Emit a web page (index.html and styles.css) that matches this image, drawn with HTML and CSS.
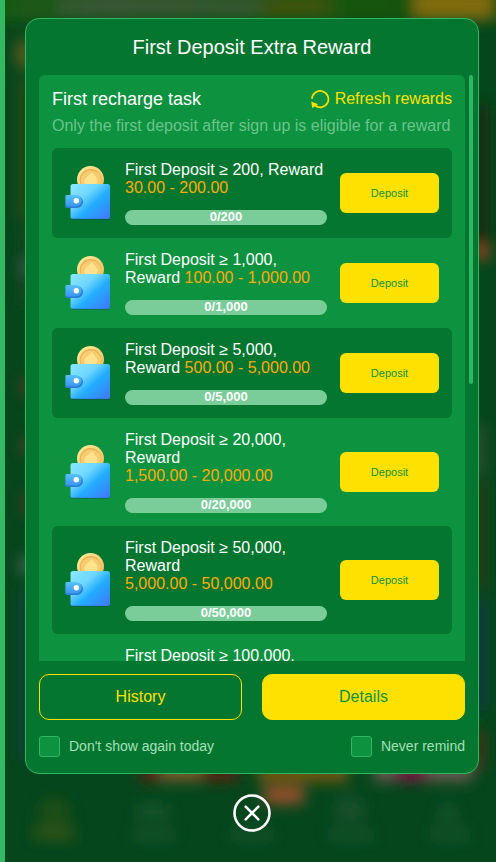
FILE: index.html
```html
<!DOCTYPE html>
<html lang="en">
<head>
<meta charset="utf-8">
<meta name="viewport" content="width=device-width, initial-scale=1">
<title>First Deposit Extra Reward</title>
<link rel="stylesheet" href="styles.css">
</head>
<body>
<svg class="backdrop" viewBox="0 0 496 862" preserveAspectRatio="none" aria-hidden="true">
  <defs>
    <filter id="blur" x="-50%" y="-50%" width="200%" height="200%"><feGaussianBlur stdDeviation="7"/></filter>
    <linearGradient id="topbar"><stop offset="0" stop-color="#125c0b"/><stop offset=".25" stop-color="#2a5426"/><stop offset=".6" stop-color="#1d560f"/><stop offset="1" stop-color="#0c500f"/></linearGradient>
  </defs>
  <rect width="496" height="862" fill="#05461d"/>
  <g filter="url(#blur)">
    <rect x="-20" y="-20" width="536" height="42" fill="url(#topbar)"/>
    <rect x="60" y="2" width="200" height="9" fill="#40583c"/>
    <rect x="262" y="2" width="66" height="9" fill="#4e5009"/>
    <rect x="414" y="-10" width="78" height="28" fill="#806c10"/>
    <ellipse cx="25" cy="54" rx="10" ry="16" fill="#5a5a1c"/>
    <rect x="18" y="80" width="14" height="140" fill="#2c4a16"/>
    <rect x="20" y="225" width="12" height="80" fill="#1f4420"/>
    <ellipse cx="27" cy="267" rx="6" ry="9" fill="#4a5a52"/>
    <ellipse cx="27" cy="387" rx="6" ry="12" fill="#54381f"/>
    <ellipse cx="27" cy="446" rx="6" ry="10" fill="#5a3a22"/>
    <ellipse cx="27" cy="504" rx="6" ry="12" fill="#4a3424"/>
    <ellipse cx="26" cy="565" rx="6" ry="10" fill="#56685c"/>
    <rect x="22" y="590" width="8" height="170" fill="#14404a"/>
    <rect x="470" y="105" width="18" height="150" fill="#1c2a10"/>
    <ellipse cx="481" cy="252" rx="9" ry="9" fill="#94431f"/>
    <rect x="470" y="425" width="14" height="50" fill="#325030"/>
    <rect x="470" y="480" width="14" height="110" fill="#2a3a18"/>
    <rect x="470" y="600" width="14" height="110" fill="#14384a"/>
    <rect x="470" y="730" width="14" height="40" fill="#4a3014"/>
    <rect x="140" y="760" width="98" height="21" fill="#5a2008"/>
    <rect x="160" y="760" width="42" height="21" fill="#7a5a2a"/>
    <rect x="258" y="760" width="90" height="22" fill="#70560f"/>
    <rect x="374" y="760" width="98" height="21" fill="#6b5a50"/>
    <rect x="394" y="760" width="34" height="21" fill="#7a1440"/>
    <rect x="264" y="786" width="40" height="18" fill="#95502b"/>
    <path d="M40 804q14-14 28 0l4 32H36z" fill="#1f4d14"/>
    <rect x="33" y="831" width="42" height="8" fill="#375712"/>
    <rect x="138" y="804" width="30" height="16" fill="#16522a"/>
    <rect x="132" y="831" width="44" height="8" fill="#1c572f"/>
    <rect x="230" y="831" width="44" height="8" fill="#1c572f"/>
    <ellipse cx="350" cy="810" rx="16" ry="14" fill="#14502a"/>
    <rect x="328" y="831" width="46" height="8" fill="#1c572f"/>
    <path d="M448 798l14 24h-28z" fill="#16522a"/>
    <rect x="430" y="831" width="40" height="8" fill="#1c572f"/>
  </g>
  <rect width="5" height="862" fill="#32b961"/>
</svg>

<svg class="sprite" aria-hidden="true">
  <defs>
    <linearGradient id="wallet-fill" x1="0" y1="0" x2="1" y2="1"><stop offset="0" stop-color="#8ce8ff"/><stop offset=".35" stop-color="#6fd6ff"/><stop offset=".58" stop-color="#22adff"/><stop offset="1" stop-color="#4176fb"/></linearGradient>
    <linearGradient id="flap-fill" x1="0" y1="0" x2="0" y2="1"><stop offset="0" stop-color="#55c3fb"/><stop offset="1" stop-color="#3b95f0"/></linearGradient>
    <linearGradient id="coin-rim" x1="0" y1="0" x2="1" y2="1"><stop offset="0" stop-color="#fff0a0"/><stop offset="1" stop-color="#efb552"/></linearGradient>
  </defs>
  <symbol id="wallet" viewBox="0 0 60 60">
    <circle cx="32.5" cy="16.5" r="13.5" fill="url(#coin-rim)"/>
    <circle cx="32.5" cy="16.8" r="10.800" fill="#ecae50"/>
    <circle cx="32.8" cy="17.400" r="10.200" fill="#f8cc70"/>
    <path d="M34 8c2 4 6 6 6 10 0 3-2 5-5 4h-5c-3 0-5-2-4-5 1-4 6-5 8-9z" fill="#ffe28c" stroke="#f2c066" stroke-width=".6"/>
    <rect x="12.500" y="22" width="39.500" height="35" rx="2.500" fill="#123f55" opacity=".3"/>
    <rect x="12.500" y="21" width="39.500" height="35" rx="2.500" fill="url(#wallet-fill)"/>
    <path d="M14 55.500h36.500" stroke="#3577dd" stroke-width="1" opacity=".5"/>
    <path d="M8.500 33H19a6 6 0 0 1 0 12H8.500a1 1 0 0 1-1-1V34a1 1 0 0 1 1-1z" fill="#277ed2"/>
    <path d="M8.500 32H18a5.700 5.700 0 0 1 0 11.400H8.500a1 1 0 0 1-1-1V33a1 1 0 0 1 1-1z" fill="url(#flap-fill)"/>
    <circle cx="18.300" cy="37.700" r="2.700" fill="#fff"/>
  </symbol>
</svg>

<main class="overlay">
  <section class="modal" role="dialog" aria-labelledby="dialog-title">
    <h1 class="modal-title" id="dialog-title">First Deposit Extra Reward</h1>
    <div class="scroller">
      <div class="panel">
        <header class="panel-head">
          <h2 class="panel-title">First recharge task</h2>
          <button class="refresh" type="button">
            <svg class="refresh-icon" viewBox="0 0 20 20" aria-hidden="true"><path d="M2 9.800A8.200 8.200 0 1 1 5 16.500" fill="none" stroke="currentColor" stroke-width="1.700"/><path d="M1.200 12.500L8 15.200 2.300 19z" fill="currentColor"/></svg>
            Refresh rewards
          </button>
        </header>
        <p class="panel-note">Only the first deposit after sign up is eligible for a reward</p>
        <ul class="tasks">
          <li class="task">
            <svg class="wallet" aria-hidden="true"><use href="#wallet"/></svg>
            <div class="task-body"><p class="task-text">First Deposit ≥ 200, Reward <span class="amount">30.00 - 200.00</span></p><div class="progress">0/200</div></div>
            <button class="deposit" type="button">Deposit</button>
          </li>
          <li class="task">
            <svg class="wallet" aria-hidden="true"><use href="#wallet"/></svg>
            <div class="task-body"><p class="task-text">First Deposit ≥ 1,000, Reward <span class="amount">100.00 - 1,000.00</span></p><div class="progress">0/1,000</div></div>
            <button class="deposit" type="button">Deposit</button>
          </li>
          <li class="task">
            <svg class="wallet" aria-hidden="true"><use href="#wallet"/></svg>
            <div class="task-body"><p class="task-text">First Deposit ≥ 5,000, Reward <span class="amount">500.00 - 5,000.00</span></p><div class="progress">0/5,000</div></div>
            <button class="deposit" type="button">Deposit</button>
          </li>
          <li class="task">
            <svg class="wallet" aria-hidden="true"><use href="#wallet"/></svg>
            <div class="task-body"><p class="task-text">First Deposit ≥ 20,000, Reward <span class="amount">1,500.00 - 20,000.00</span></p><div class="progress">0/20,000</div></div>
            <button class="deposit" type="button">Deposit</button>
          </li>
          <li class="task">
            <svg class="wallet" aria-hidden="true"><use href="#wallet"/></svg>
            <div class="task-body"><p class="task-text">First Deposit ≥ 50,000, Reward <span class="amount">5,000.00 - 50,000.00</span></p><div class="progress">0/50,000</div></div>
            <button class="deposit" type="button">Deposit</button>
          </li>
          <li class="task task-peek">
            <div class="task-body"><p class="task-text">First Deposit ≥ 100,000,</p></div>
          </li>
        </ul>
      </div>
      <div class="scroll-thumb"></div>
    </div>
    <div class="actions">
      <button class="action action-outline" type="button">History</button>
      <button class="action action-solid" type="button">Details</button>
    </div>
    <div class="options">
      <label class="option"><input class="check" type="checkbox">Don't show again today</label>
      <label class="option"><input class="check" type="checkbox">Never remind</label>
    </div>
  </section>
  <button class="close" type="button" aria-label="Close">
    <svg class="close-icon" viewBox="0 0 38 38" aria-hidden="true"><circle cx="19" cy="19" r="17.500" fill="none" stroke="#fff" stroke-width="2.600"/><path d="M12.700 12.700l12.600 12.600M25.300 12.700L12.700 25.300" stroke="#fff" stroke-width="2.600" stroke-linecap="round"/></svg>
  </button>
</main>
</body>
</html>
```
FILE: styles.css
```css
* { box-sizing: border-box; }

body {
  margin: 0;
  background: #05461d;
  font-family: "Liberation Sans", Arial, sans-serif;
  color: #fff;
}

h1, h2, p, ul { margin: 0; padding: 0; font-weight: 400; }
button { font-family: inherit; cursor: pointer; }

.backdrop {
  position: absolute;
  inset: 0;
  width: 100%;
  height: 100%;
  z-index: -1;
}

.sprite { position: absolute; width: 0; height: 0; }

.overlay {
  height: 100vh;
  padding: 18px 17px 30px 25px;
  display: flex;
  flex-direction: column;
  align-items: center;
  gap: 20px;
}

.modal {
  width: 100%;
  flex: 1;
  min-height: 0;
  display: flex;
  flex-direction: column;
  padding: 0 13px 16px;
  background: #05762f;
  border: 1px solid #2fb863;
  border-radius: 14px;
}

.modal-title {
  font-size: 20px;
  line-height: 56px;
  text-align: center;
}

.scroller {
  position: relative;
  flex: 1;
  min-height: 0;
}

.panel {
  height: 100%;
  overflow: hidden;
  padding: 13px 13px 0;
  background: #0d923f;
  border-radius: 6px 6px 0 0;
}

.scroll-thumb {
  position: absolute;
  top: 0;
  right: -8px;
  width: 4px;
  height: 309px;
  border-radius: 2px;
  background: #2fb863;
}

.panel-head {
  display: flex;
  justify-content: space-between;
  align-items: center;
  height: 22px;
}

.panel-title { font-size: 18px; line-height: 22px; }

.refresh {
  display: flex;
  align-items: center;
  gap: 5px;
  padding: 0;
  border: 0;
  background: none;
  color: #ffe100;
  font-size: 16px;
  line-height: 22px;
}

.refresh-icon { width: 20px; height: 20px; }

.panel-note {
  padding-top: 5px;
  font-size: 16px;
  line-height: 22px;
  color: #6bc48c;
  white-space: nowrap;
}

.tasks { list-style: none; padding-top: 11px; }

.task {
  display: flex;
  align-items: center;
  padding: 13px 13px 13px 6px;
  border-radius: 6px;
}

.task:nth-child(odd) { background: #05762f; }

.wallet { width: 60px; height: 60px; flex: none; }

.task-body {
  flex: 1;
  margin: 0 13px 0 7px;
}

.task-peek .task-body { margin-left: 67px; }

.task-text { font-size: 16px; line-height: 18px; }

.amount { color: #ffaa09; white-space: nowrap; }

.progress {
  margin-top: 13px;
  height: 15px;
  border-radius: 8px;
  background: #7acd99;
  font-size: 13px;
  font-weight: 700;
  line-height: 14px;
  text-align: center;
}

.deposit {
  width: 99px;
  height: 40px;
  flex: none;
  padding: 0;
  border: 0;
  border-radius: 6px;
  background: #ffe100;
  color: #0d923f;
  font-size: 11px;
}

.actions {
  display: grid;
  grid-template-columns: 1fr 1fr;
  gap: 20px;
  padding-top: 13px;
}

.action {
  height: 46px;
  border: 1px solid #ffe100;
  border-radius: 10px;
  font-size: 16px;
}

.action-outline { background: none; color: #ffe100; }
.action-solid { background: #ffe100; color: #0d923f; }

.options {
  display: flex;
  justify-content: space-between;
  padding-top: 16px;
}

.option {
  display: flex;
  align-items: center;
  gap: 9px;
  font-size: 14px;
  line-height: 21px;
  color: #a4e0b8;
}

.check {
  appearance: none;
  width: 21px;
  height: 21px;
  margin: 0;
  border: 1px solid #2fb863;
  border-radius: 3px;
  background: #0d923f;
}

.close {
  width: 38px;
  height: 38px;
  flex: none;
  padding: 0;
  border: 0;
  background: none;
}

.close-icon { display: block; width: 38px; height: 38px; }
```
